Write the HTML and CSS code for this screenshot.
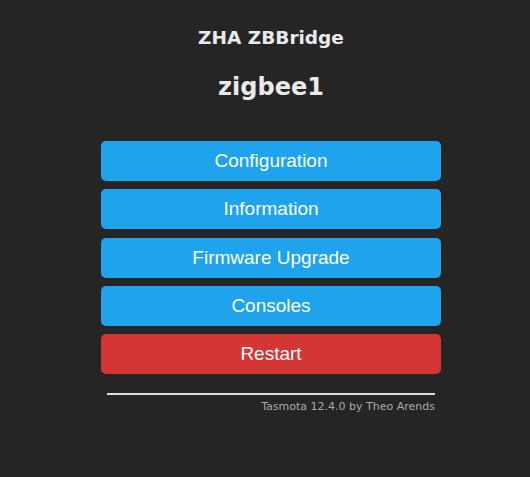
FILE: index.html
```html
<!DOCTYPE html>
<html>
<head>
<meta charset="utf-8">
<link rel="stylesheet" href="styles.css">
</head>
<body>
<div class="page">
  <div class="main">
    <div class="head">
      <h3 class="module">ZHA ZBBridge</h3>
      <h2 class="device">zigbee1</h2>
    </div>
    <div class="menu">
      <button class="btn">Configuration</button>
      <button class="btn">Information</button>
      <button class="btn">Firmware Upgrade</button>
      <button class="btn">Consoles</button>
      <button class="btn btn-red">Restart</button>
    </div>
    <div class="foot">
      <hr class="rule">
      <div class="credit">Tasmota 12.4.0 by Theo Arends</div>
    </div>
  </div>
</div>
</body>
</html>
```

FILE: styles.css
```css
html, body {
  margin: 0;
  padding: 0;
  background: #252525;
}
.page {
  display: flex;
  justify-content: center;
  padding-left: 12px;
  font-family: "DejaVu Sans", Verdana, sans-serif;
  color: #eaeaea;
}
.main {
  width: 340px;
  display: flex;
  flex-direction: column;
}
.head {
  text-align: center;
  padding-top: 26px;
}
.module {
  margin: 0;
  font-size: 18.5px;
  font-weight: bold;
  line-height: 24px;
}
.device {
  margin: 22px 0 0 0;
  font-size: 24px;
  font-weight: bold;
  line-height: 30px;
}
.menu {
  margin-top: 39px;
  display: flex;
  flex-direction: column;
  gap: 8.25px;
}
.btn {
  display: block;
  width: 100%;
  height: 40px;
  border: 0;
  border-radius: 5px;
  background: #1fa3ec;
  color: #fff;
  font-family: "Liberation Sans", Arial, sans-serif;
  font-size: 19px;
  padding: 0;
  margin: 0;
}
.btn-red {
  background: #d43535;
}
.foot {
  padding: 0 6px;
  margin-top: 19px;
}
.rule {
  margin: 0;
  border: 0;
  height: 2px;
  background: #dcdcdc;
}
.credit {
  text-align: right;
  font-size: 11px;
  color: #aaa;
  margin-top: 5px;
  line-height: 14px;
}
```
